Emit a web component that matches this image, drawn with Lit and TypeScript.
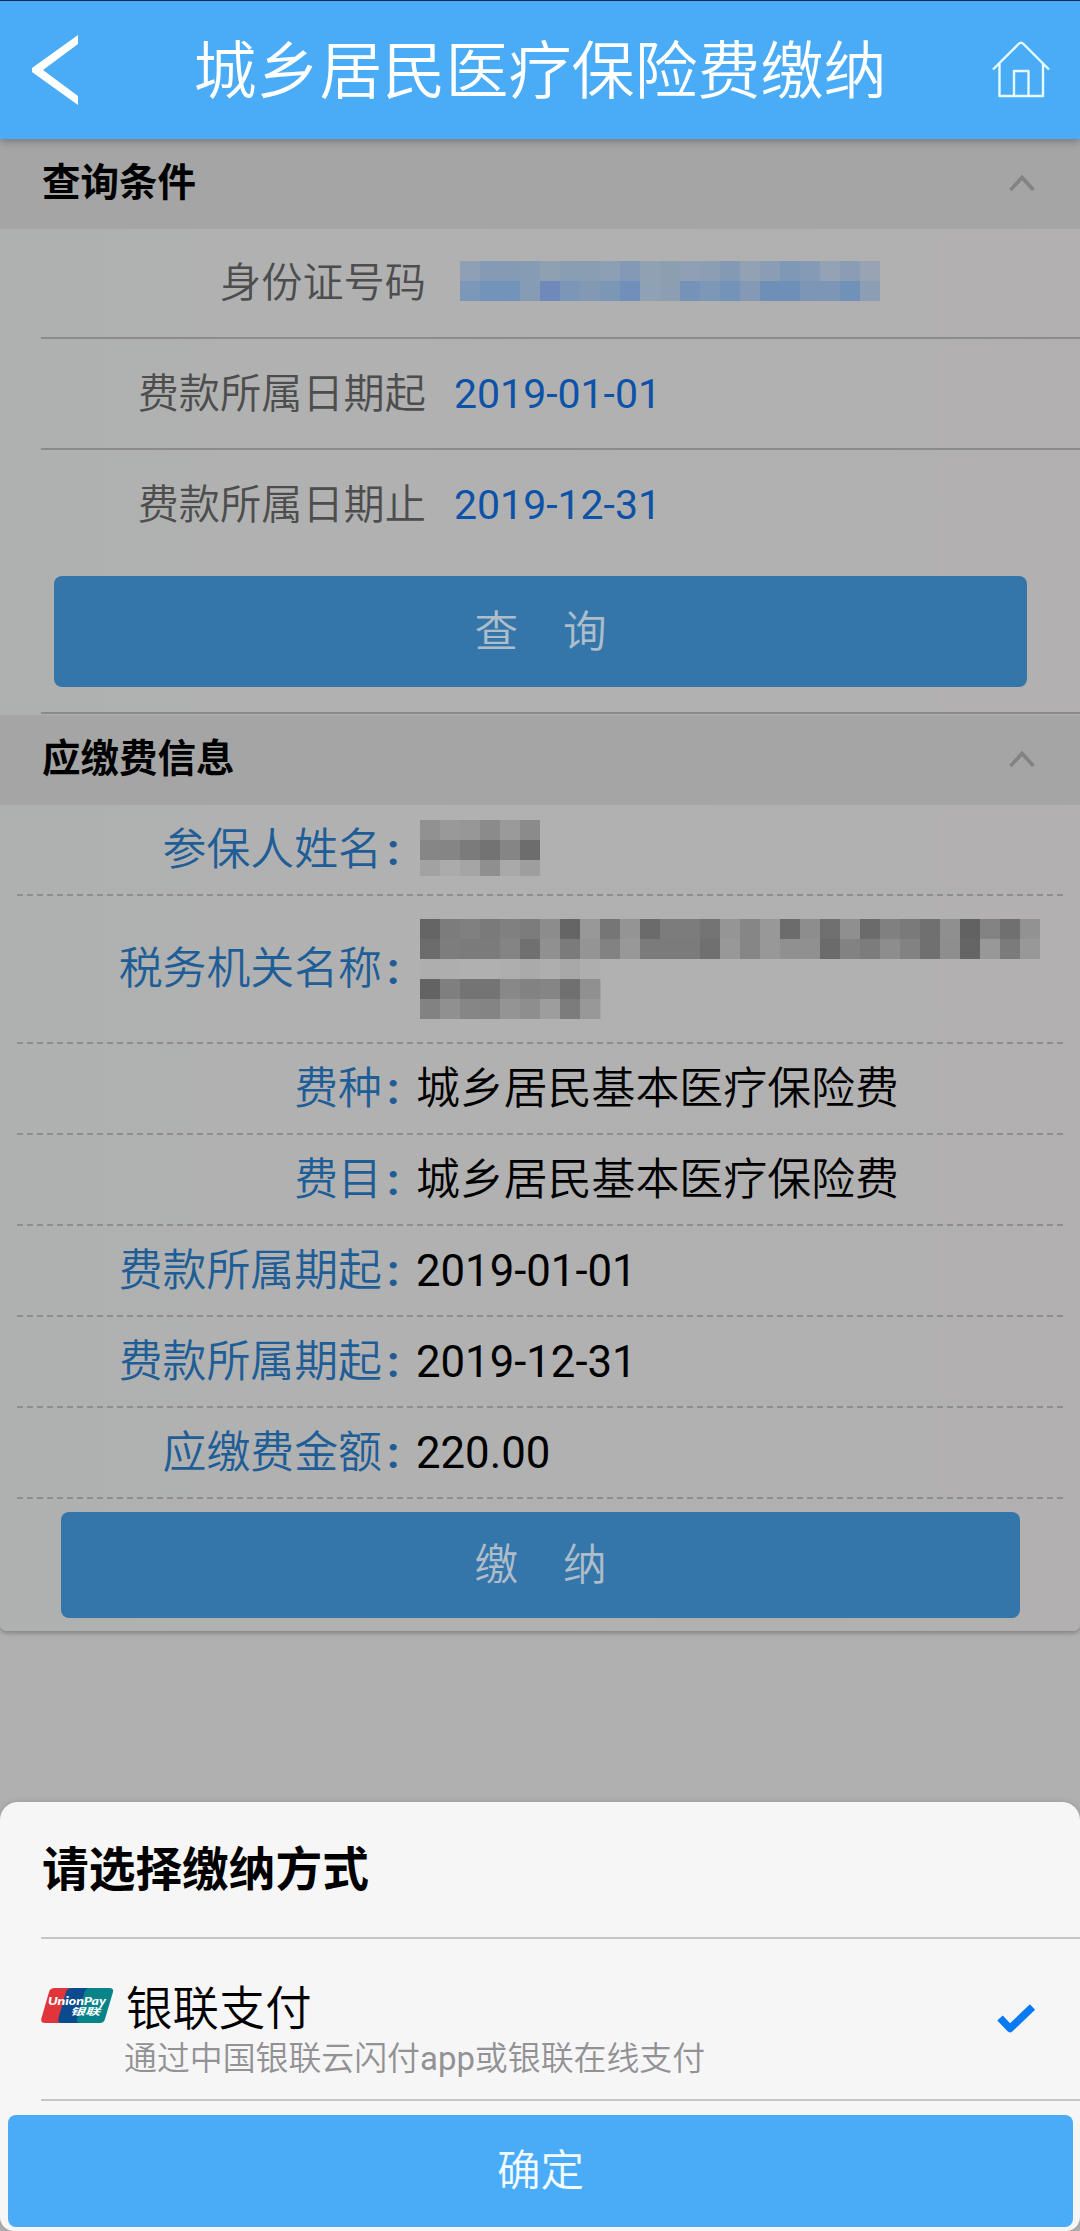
import { LitElement, html, css, svg } from "lit";
import { customElement, property } from "lit/decorators.js";

const FONT = css`Roboto, "Noto Sans CJK SC", sans-serif`;

/** Pixelated mask over private data: one colour per cell, one height per row. */
@customElement("pixel-mask")
export class PixelMask extends LitElement {
  static styles = css`
    :host { display: block; }
    svg { display: block; }
  `;
  @property({ attribute: false }) rows: string[][] = [];
  @property({ attribute: false }) heights: number[] = [];
  @property({ type: Number }) cell = 20;

  render() {
    const cols = Math.max(...this.rows.map((r) => r.length));
    const width = cols * this.cell;
    const height = this.heights.reduce((a, b) => a + b, 0);
    let y = 0;
    const cells = this.rows.map((row, i) => {
      const top = y;
      y += this.heights[i];
      return row.map(
        (fill, c) =>
          svg`<rect x=${c * this.cell} y=${top} width=${this.cell + 0.4} height=${this.heights[i]} fill=${fill}></rect>`
      );
    });
    return html`<svg width=${width} height=${height} viewBox="0 0 ${width} ${height}">${cells}</svg>`;
  }
}

const greys = (s: string) => s.split(" ").map((v) => `#${v}${v}${v}`);
const blues = (s: string) => s.split(" ").map((v) => `#${v}`);

const ID_MASK = [
  blues("8fa0b4 849bb5 849bb3 869cb4 8fa0b3 8a9eb2 8a9eb2 8c9fb4 839ab6 90a1b4 8c9fb0 8fa0b4 8b9eb4 849ab4 92a2b4 8a9db4 7f98b6 859ab5 93a2b5 8b9db5 98a3b3"),
  blues("7c98b8 7394ba 7394ba 859bb6 6f8aba 7c96b8 8299b5 7a97b6 718fba 8fa1b5 8c9fb2 7593b9 7d97b7 7493b9 8499b5 6e90b6 6e90b8 7d96b6 7d96b6 7091b8 8c9eb3"),
];
const NAME_MASK = [
  greys("91 99 97 8b 9a 8b"),
  greys("86 85 7b 73 85 6d"),
  greys("a2 ab a5 8f a9 9e"),
];
const ORG_MASK = [
  greys("65 7c 80 7a 80 7c 8c 65 98 76 94 6b 7c 7c 74 95 86 98 6c 8d 70 8f 6b 80 7a 70 8f 62 83 70 92"),
  greys("6c 7d 7b 7b 84 70 90 7b 94 82 98 7b 7b 7b 70 98 86 98 90 90 6b 82 7c 8d 82 70 8e 65 98 7b 98"),
  greys("ae ae b0 b0 ae aa ae a8 ae"),
  greys("63 7f 74 74 88 82 85 70 90"),
  greys("82 90 86 84 94 8e 9d 7c 98"),
];

@customElement("section-bar")
export class SectionBar extends LitElement {
  static styles = css`
    :host { display: block; }
    .bar {
      height: 90px; box-sizing: border-box; padding: 0 45px 3px 42px;
      display: flex; align-items: center; justify-content: space-between;
      background: #a4a5a4; color: #000; font: 700 38.5px/56px ${FONT};
    }
    .chevron { margin-top: 1px; display: block; }
  `;
  @property() heading = "";
  render() {
    return html`<div class="bar">
      <span>${this.heading}</span>
      <svg class="chevron" width="26" height="18" viewBox="0 0 26 18" fill="none" stroke="#828383" stroke-width="3.6">
        <path d="M1.500 16 13 3.500 24.500 16" />
      </svg>
    </div>`;
  }
}

@customElement("app-root")
export class AppRoot extends LitElement {
  static styles = css`
    :host { display: block; }
    .screen {
      position: relative; height: 2231px; overflow: hidden; box-sizing: border-box;
      background: #b1b0b0; font-family: ${FONT}; border-top: 1px solid #14265a;
    }
    .top {
      position: relative; z-index: 1; height: 138px; box-sizing: border-box; padding: 0 30px 0 31px;
      display: flex; align-items: center; justify-content: space-between;
      background: #4aabf6; color: #fff; box-shadow: 0 2px 8px rgba(0, 0, 0, 0.3);
    }
    .top h1 { margin: 0; font-size: 63px; font-weight: 350; line-height: 90px; padding: 4px 0 0 7px; }
    .top svg { display: block; }
    .top .home { margin-bottom: 3px; }
    .card {
      height: 1492px; border-radius: 0 0 7px 7px;
      background: linear-gradient(90deg, #afb1b0, #b1b1b1 40%, #b2b0b1);
      box-shadow: 0 2px 5px rgba(0, 0, 0, 0.28);
    }
    .query { height: 486px; box-sizing: border-box; padding-left: 41px; }
    .field {
      height: 111px; box-sizing: border-box; border-bottom: 2px solid #8b8b8c;
      display: flex; align-items: center;
      font-size: 41.2px; line-height: 60px;
    }
    .field.first { height: 110px; }
    .field.last { border: 0; height: 126px; padding-bottom: 16px; }
    .field .name { width: 385px; text-align: right; color: #4d4d4e; font-weight: 350; }
    .field .val { padding-left: 28px; color: #0c52a8; font-size: 41px; }
    .field pixel-mask { margin: -5px 0 0 34px; }
    .btn {
      display: flex; align-items: center; justify-content: center; box-sizing: border-box; padding-top: 2px;
      font-weight: 350; font-size: 43.6px; line-height: 64px; border-radius: 8px; white-space: pre;
      background: #3576aa; color: #adbdca;
    }
    .btn .gap { width: 45px; }
    .search { height: 111px; margin: 0 53px 0 13px; }
    .rule { height: 2px; margin-top: 25px; background: #8b8b8c; }
    .bills { padding: 0 14px 0 17px; }
    .bill {
      height: 91px; box-sizing: border-box; display: flex; align-items: center;
      padding-bottom: 2px; font-size: 43.9px; line-height: 64px;
      background: repeating-linear-gradient(90deg, #8e8e8f 0 6px, transparent 6px 10px) bottom / 100% 2px no-repeat;
    }
    .bill.tall { height: 148px; }
    .bill .name { width: 365px; text-align: right; color: #1f5d97; font-weight: 350; }
    .bill .colon { width: 34px; box-sizing: border-box; padding-left: 5px; color: #1f5d97; font-weight: 700; }
    .bill .val { color: #000; font-weight: 350; }
    .bill .val.num { font-weight: 400; font-size: 43.7px; }
    .bill pixel-mask { margin: 0 0 0 4px; }
    .bill .up { margin-top: -3px; }
    .pay { height: 106px; margin: 13px 60px 0 61px; }
    .sheet {
      position: absolute; left: 0; right: 0; bottom: 0; height: 429px; box-sizing: border-box;
      border-radius: 18px 18px 14px 14px; background: #f7f6f7; padding-left: 41px;
      box-shadow: 0 0 6px rgba(0, 0, 0, 0.15);
    }
    .sheet h2 {
      margin: 0; height: 137px; box-sizing: border-box; padding: 35px 0 0 1px;
      border-bottom: 2px solid #c6c5c8; color: #000; font-weight: 700; font-size: 46.7px; line-height: 67px;
    }
    .option {
      height: 162px; box-sizing: border-box; border-bottom: 2px solid #c6c5c8;
      display: flex; align-items: flex-start; padding: 0 44px 0 0;
    }
    .option .logo { display: block; margin-top: 49px; }
    .option .text { flex: 1; padding: 37px 0 0 10px; }
    .option .title { font-size: 46.4px; line-height: 67px; font-weight: 350; color: #000; padding-left: 2px; }
    .option .note { font-size: 32.9px; line-height: 48px; font-weight: 350; color: #929194; margin-top: -8px; }
    .option .latin { font-weight: 400; }
    .option .check { display: block; margin-top: 65px; }
    .ok { height: 112px; margin: 14px 7px 0 -33px; background: #4aabf6; color: #f2fbff; }
  `;

  private billRow(name: string, val: string, num = false) {
    return html`<div class="bill">
      <span class="name">${name}</span><span class="colon">:</span>
      <span class="val ${num ? "num" : ""}">${val}</span>
    </div>`;
  }

  render() {
    return html`
      <div class="screen">
        <header class="top">
          <svg width="50" height="72" viewBox="0 0 50 72">
            <path d="M47 1V10L12 36 47 62V71L1 38V34Z" fill="#fff" />
          </svg>
          <h1>城乡居民医疗保险费缴纳</h1>
          <svg class="home" width="58" height="58" viewBox="0 0 58 58" fill="none" stroke="#e4fbff" stroke-width="2.4" stroke-linejoin="round">
            <path d="M1 29.500 26.500 4Q29 1.500 31.500 4L57 29.500M7.500 24V56H51V24M22 56V31H36.500V56" />
          </svg>
        </header>

        <main class="card">
          <section-bar heading="查询条件"></section-bar>
          <div class="query">
            <div class="field first">
              <span class="name">身份证号码</span>
              <pixel-mask .rows=${ID_MASK} .heights=${[20, 20]} .cell=${20}></pixel-mask>
            </div>
            <div class="field"><span class="name">费款所属日期起</span><span class="val">2019-01-01</span></div>
            <div class="field last"><span class="name">费款所属日期止</span><span class="val">2019-12-31</span></div>
            <div class="btn search"><span>查</span><span class="gap"></span><span>询</span></div>
            <div class="rule"></div>
          </div>

          <section-bar heading="应缴费信息"></section-bar>
          <div class="bills">
            <div class="bill">
              <span class="name">参保人姓名</span><span class="colon">:</span>
              <pixel-mask class="up" .rows=${NAME_MASK} .heights=${[20, 20, 16]} .cell=${20}></pixel-mask>
            </div>
            <div class="bill tall">
              <span class="name">税务机关名称</span><span class="colon">:</span>
              <pixel-mask .rows=${ORG_MASK} .heights=${[20, 20, 20, 20, 20]} .cell=${20}></pixel-mask>
            </div>
            ${this.billRow("费种", "城乡居民基本医疗保险费")}
            ${this.billRow("费目", "城乡居民基本医疗保险费")}
            ${this.billRow("费款所属期起", "2019-01-01", true)}
            ${this.billRow("费款所属期起", "2019-12-31", true)}
            ${this.billRow("应缴费金额", "220.00", true)}
          </div>
          <div class="btn pay"><span>缴</span><span class="gap"></span><span>纳</span></div>
        </main>

        <section class="sheet">
          <h2>请选择缴纳方式</h2>
          <div class="option">
            <svg class="logo" width="73" height="35" viewBox="0 0 73 35">
              <path d="M14 0H30L20 35H4Q-1 35 .5 30L8 4Q9 0 14 0Z" fill="#e0353a" />
              <path d="M31 0H50L40 35H21Q16 35 17.500 30L25 4Q26 0 31 0Z" fill="#0c4a8e" />
              <path d="M49 0H68Q73 0 72 4L64 31Q63 35 59 35H39Q35 35 36 31L43.500 4Q45 0 49 0Z" fill="#08838a" />
              <text x="7" y="16.500" textLength="58" lengthAdjust="spacingAndGlyphs" font-family="Lato, sans-serif" font-weight="900" font-style="italic" font-size="11.5" fill="#fff">UnionPay</text>
              <text x="29" y="26.500" textLength="30" lengthAdjust="spacingAndGlyphs" font-family="Noto Sans CJK SC, sans-serif" font-weight="700" font-style="italic" font-size="9.5" fill="#fff">银联</text>
            </svg>
            <div class="text">
              <div class="title">银联支付</div>
              <div class="note">通过中国银联云闪付<span class="latin">app</span>或银联在线支付</div>
            </div>
            <svg class="check" width="39" height="30" viewBox="0 0 39 30" fill="none" stroke="#0a7af2" stroke-width="7.5" stroke-linejoin="round">
              <path d="M3 14 13 24.500 35.500 3" />
            </svg>
          </div>
          <div class="btn ok">确定</div>
        </section>
      </div>
    `;
  }
}
